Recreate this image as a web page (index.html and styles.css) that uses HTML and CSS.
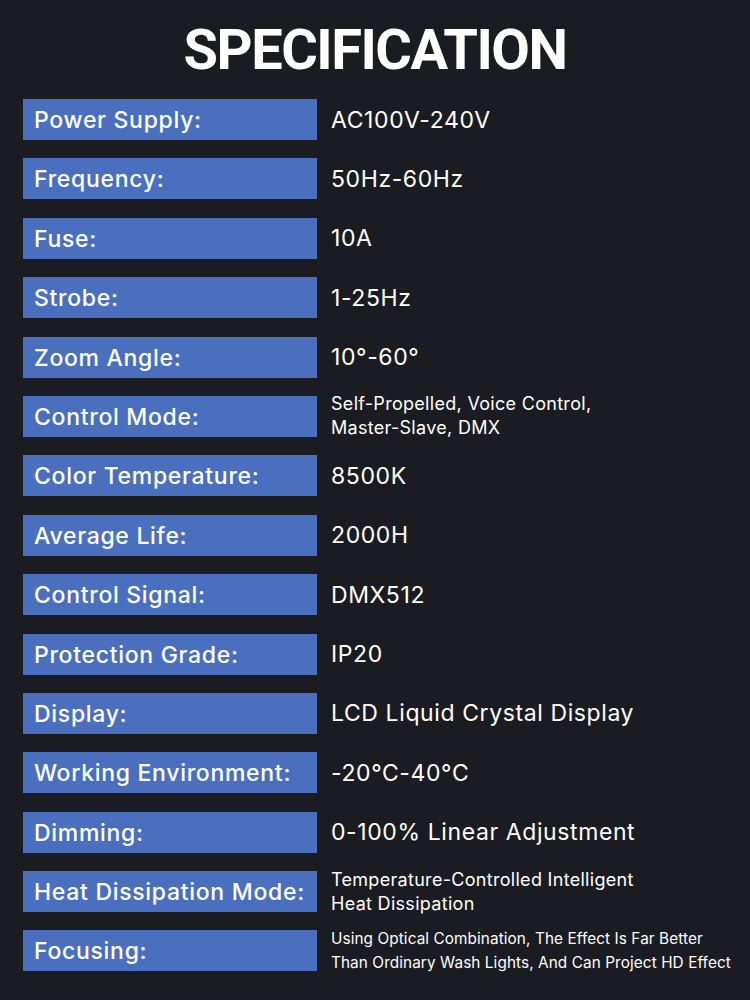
FILE: index.html
```html
<!DOCTYPE html>
<html>
<head>
<meta charset="utf-8">
<link rel="stylesheet" href="styles.css">
</head>
<body>
<div class="page">
  <h1 class="title">SPECIFICATION</h1>
  <div class="specs">
    <div class="row"><div class="label">Power Supply:</div><div class="value">AC100V-240V</div></div>
    <div class="row"><div class="label">Frequency:</div><div class="value">50Hz-60Hz</div></div>
    <div class="row"><div class="label">Fuse:</div><div class="value">10A</div></div>
    <div class="row"><div class="label">Strobe:</div><div class="value">1-25Hz</div></div>
    <div class="row"><div class="label">Zoom Angle:</div><div class="value">10°-60°</div></div>
    <div class="row"><div class="label">Control Mode:</div><div class="value small">Self-Propelled, Voice Control,<br>Master-Slave, DMX</div></div>
    <div class="row"><div class="label">Color Temperature:</div><div class="value">8500K</div></div>
    <div class="row"><div class="label">Average Life:</div><div class="value">2000H</div></div>
    <div class="row"><div class="label">Control Signal:</div><div class="value">DMX512</div></div>
    <div class="row"><div class="label">Protection Grade:</div><div class="value">IP20</div></div>
    <div class="row"><div class="label">Display:</div><div class="value">LCD Liquid Crystal Display</div></div>
    <div class="row"><div class="label">Working Environment:</div><div class="value">-20°C-40°C</div></div>
    <div class="row"><div class="label">Dimming:</div><div class="value">0-100% Linear Adjustment</div></div>
    <div class="row"><div class="label">Heat Dissipation Mode:</div><div class="value small">Temperature-Controlled Intelligent<br>Heat Dissipation</div></div>
    <div class="row"><div class="label">Focusing:</div><div class="value tiny">Using Optical Combination, The Effect Is Far Better<br>Than Ordinary Wash Lights, And Can Project HD Effect</div></div>
  </div>
</div>
</body>
</html>
```
FILE: styles.css
```css
html, body {
  margin: 0;
  padding: 0;
  background: #1b1c21;
}
.page {
  width: 750px;
  height: 1000px;
  box-sizing: border-box;
  padding-top: 20px;
  font-family: "Inter", "Noto Sans", sans-serif;
  color: #ffffff;
}
.title {
  margin: 0;
  text-align: center;
  font-family: "Roboto", "Liberation Sans", sans-serif;
  font-weight: 700;
  font-size: 56px;
  line-height: 60px;
  letter-spacing: -1.5px;
  color: #ffffff;
}
.specs {
  margin-top: 19px;
  padding-left: 23px;
  display: flex;
  flex-direction: column;
  gap: 18.4px;
}
.row {
  display: flex;
  align-items: center;
  height: 41px;
}
.label {
  width: 294px;
  height: 41px;
  box-sizing: border-box;
  padding-left: 11px;
  padding-top: 1px;
  background: #4a6fbf;
  display: flex;
  align-items: center;
  font-size: 23px;
  font-weight: 500;
  letter-spacing: 0.7px;
  white-space: nowrap;
  flex-shrink: 0;
}
.value {
  margin-left: 14px;
  font-size: 23px;
  font-weight: 400;
  letter-spacing: 0.6px;
  white-space: nowrap;
}
.value.small {
  font-size: 18px;
  line-height: 24px;
  letter-spacing: 0.3px;
}
.value.tiny {
  font-size: 15.3px;
  line-height: 24px;
  letter-spacing: 0.1px;
}
```
